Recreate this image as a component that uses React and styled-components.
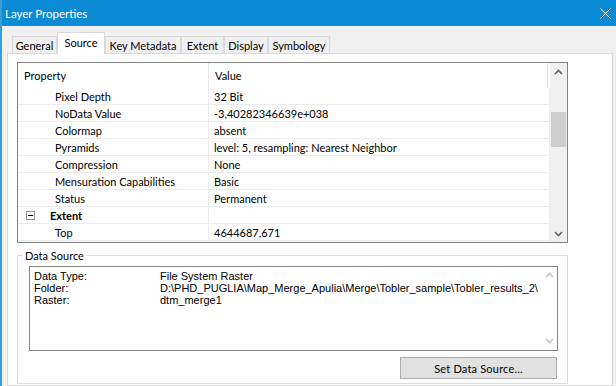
import React from "react";
import styled, { createGlobalStyle } from "styled-components";

const Global = createGlobalStyle`
  html, body { margin: 0; padding: 0; background: #f0f0f0; overflow: hidden; }
  * { box-sizing: border-box; }
`;

const UI = `"Lato", "Liberation Sans", sans-serif`;
const CLASSIC = `"Liberation Sans", Arial, sans-serif`;

const Window = styled.div`
  width: 616px;
  height: 386px;
  display: flex;
  flex-direction: column;
  border-left: 2px solid #3a9bd6;
  background: #f0f0f0;
  overflow: hidden;
  font-family: ${UI};
  font-size: 11px;
  color: #000;
`;

const TitleBar = styled.div`
  height: 26px;
  flex: none;
  background: #0b8ad6;
  color: #fff;
  display: flex;
  align-items: center;
  justify-content: space-between;
  padding: 0 5px 0 3px;
  font-size: 11.5px;
`;

const Body = styled.div`
  flex: 1;
  display: flex;
  flex-direction: column;
  padding: 6px 3px 0 5px;
  min-height: 0;
`;

const TabStrip = styled.div`
  height: 21px;
  flex: none;
  display: flex;
  align-items: flex-end;
  padding-left: 5px;
`;

const Tab = styled.div`
  width: ${(p) => p.$w}px;
  height: ${(p) => (p.$active ? 22 : 17)}px;
  margin-bottom: ${(p) => (p.$active ? -1 : 0)}px;
  position: relative;
  z-index: ${(p) => (p.$active ? 1 : 0)};
  background: ${(p) => (p.$active ? "#fff" : "#f0f0f0")};
  border: 1px solid #d9d9d9;
  border-bottom: none;
  display: flex;
  align-items: center;
  justify-content: center;
  padding-bottom: ${(p) => (p.$active ? 2 : 0)}px;
  font-size: 11px;
`;

const Page = styled.div`
  flex: 1;
  background: #fff;
  border: 1px solid #d9d9d9;
  padding: 8px 0 0 9px;
  display: flex;
  flex-direction: column;
  height: 340px;
`;

const Grid = styled.div`
  width: 551px;
  height: 181px;
  flex: none;
  border: 1px solid #828282;
  display: flex;
`;

const GridContent = styled.div`
  flex: 1;
  display: flex;
  flex-direction: column;
  overflow: hidden;
`;

const HeaderRow = styled.div`
  height: 25px;
  flex: none;
  display: grid;
  grid-template-columns: 191px 1fr;
  border-right: 1px solid #e5e5e5;
  margin-right: 2px;
`;

const HeaderCell = styled.div`
  display: flex;
  align-items: center;
  padding-left: ${(p) => p.$pad}px;
  border-right: ${(p) => (p.$divider ? "1px solid #e5e5e5" : "none")};
  font-size: 11px;
`;

const Row = styled.div`
  height: 17px;
  flex: none;
  display: grid;
  grid-template-columns: 191px 1fr;
  border-bottom: 1px solid #ececec;
  border-right: 1px solid #ececec;
`;

const NameCell = styled.div`
  display: flex;
  align-items: center;
  padding-left: ${(p) => (p.$group ? 8 : 37)}px;
  border-right: 1px solid #ececec;
  font-weight: ${(p) => (p.$group ? 700 : 400)};
  font-size: 11px;
  white-space: nowrap;
`;

const ValueCell = styled.div`
  display: flex;
  align-items: center;
  padding-left: 5px;
  font-size: 11px;
  white-space: nowrap;
`;

const ExpandBox = styled.span`
  width: 9px;
  height: 9px;
  border: 1px solid #919191;
  display: inline-flex;
  align-items: center;
  justify-content: center;
  margin-right: 15px;
  &::before {
    content: "";
    width: 5px;
    height: 1px;
    background: #000;
  }
`;

const ScrollBar = styled.div`
  width: 17px;
  flex: none;
  background: #f0f0f0;
  display: flex;
  flex-direction: column;
`;

const ScrollArrow = styled.div`
  height: 17px;
  flex: none;
  display: flex;
  align-items: center;
  justify-content: center;
`;

const ScrollTrack = styled.div`
  flex: 1;
  display: flex;
  flex-direction: column;
`;

const Thumb = styled.div`
  margin: 32px 1px 0;
  height: 35px;
  background: #cdcdcd;
`;

const GroupBox = styled.div`
  width: 551px;
  margin-top: 12px;
  border: 1px solid #dcdcdc;
  display: flex;
  flex-direction: column;
  align-items: flex-start;
  padding-bottom: 4px;
`;

const GroupLabel = styled.div`
  margin: -7px 0 0 5px;
  padding: 0 2px;
  height: 13px;
  line-height: 13px;
  background: #fff;
  font-size: 11px;
`;

const TextBox = styled.div`
  margin: 4px 0 0 11px;
  width: 529px;
  height: 85px;
  border: 1px solid #828282;
  display: flex;
  font-family: ${CLASSIC};
  font-size: 11px;
`;

const InfoGrid = styled.div`
  flex: 1;
  padding: 3px 0 0 4px;
  display: grid;
  grid-template-columns: 126px 1fr;
  grid-auto-rows: 12px;
  line-height: 12px;
  align-content: start;
  white-space: nowrap;
`;

const InnerScroll = styled.div`
  width: 16px;
  flex: none;
  display: flex;
  flex-direction: column;
  justify-content: space-between;
  align-items: center;
  padding: 5px 0 6px;
`;

const Button = styled.button`
  align-self: flex-end;
  margin: 6px 10px 0 0;
  width: 157px;
  height: 22px;
  background: #e1e1e1;
  border: 1px solid #adadad;
  font-family: ${UI};
  font-size: 11px;
  color: #000;
  padding: 0;
  letter-spacing: 0.2px;
`;

const Chevron = ({ up, color = "#606060" }) => (
  <svg width="9" height="6" viewBox="0 0 9 6">
    <path
      d={up ? "M1 5 L4.5 1.5 L8 5" : "M1 1 L4.5 4.5 L8 1"}
      fill="none"
      stroke={color}
      strokeWidth="1.6"
    />
  </svg>
);

const tabs = [
  ["General", 45],
  ["Source", 48],
  ["Key Metadata", 76],
  ["Extent", 43],
  ["Display", 44],
  ["Symbology", 62],
];

const rows = [
  ["Pixel Depth", "32 Bit"],
  ["NoData Value", "-3,40282346639e+038"],
  ["Colormap", "absent"],
  ["Pyramids", "level: 5, resampling: Nearest Neighbor"],
  ["Compression", "None"],
  ["Mensuration Capabilities", "Basic"],
  ["Status", "Permanent"],
  ["Extent", "", true],
  ["Top", "4644687,671"],
];

const info = [
  ["Data Type:", "File System Raster"],
  ["Folder:", "D:\\PHD_PUGLIA\\Map_Merge_Apulia\\Merge\\Tobler_sample\\Tobler_results_2\\"],
  ["Raster:", "dtm_merge1"],
];

export default function App() {
  return (
    <>
      <Global />
      <Window>
        <TitleBar>
          <span>Layer Properties</span>
          <svg width="11" height="11" viewBox="0 0 11 11">
            <path d="M0.5 0.5 L10.5 10.5 M10.5 0.5 L0.5 10.5" stroke="#fff" strokeWidth="1" />
          </svg>
        </TitleBar>
        <Body>
          <TabStrip>
            {tabs.map(([t, w]) => (
              <Tab key={t} $w={w} $active={t === "Source"}>
                {t}
              </Tab>
            ))}
          </TabStrip>
          <Page>
            <Grid>
              <GridContent>
                <HeaderRow>
                  <HeaderCell $pad={6} $divider>Property</HeaderCell>
                  <HeaderCell $pad={6}>Value</HeaderCell>
                </HeaderRow>
                {rows.map(([n, v, g]) => (
                  <Row key={n + v}>
                    <NameCell $group={g}>
                      {g && <ExpandBox />}
                      {n}
                    </NameCell>
                    <ValueCell>{v}</ValueCell>
                  </Row>
                ))}
              </GridContent>
              <ScrollBar>
                <ScrollArrow>
                  <Chevron up />
                </ScrollArrow>
                <ScrollTrack>
                  <Thumb />
                </ScrollTrack>
                <ScrollArrow>
                  <Chevron />
                </ScrollArrow>
              </ScrollBar>
            </Grid>
            <GroupBox>
              <GroupLabel>Data Source</GroupLabel>
              <TextBox>
                <InfoGrid>
                  {info.map(([k, v]) => (
                    <React.Fragment key={k}>
                      <span>{k}</span>
                      <span>{v}</span>
                    </React.Fragment>
                  ))}
                </InfoGrid>
                <InnerScroll>
                  <Chevron up color="#c4c4c4" />
                  <Chevron color="#c4c4c4" />
                </InnerScroll>
              </TextBox>
              <Button>Set Data Source...</Button>
            </GroupBox>
          </Page>
        </Body>
      </Window>
    </>
  );
}
